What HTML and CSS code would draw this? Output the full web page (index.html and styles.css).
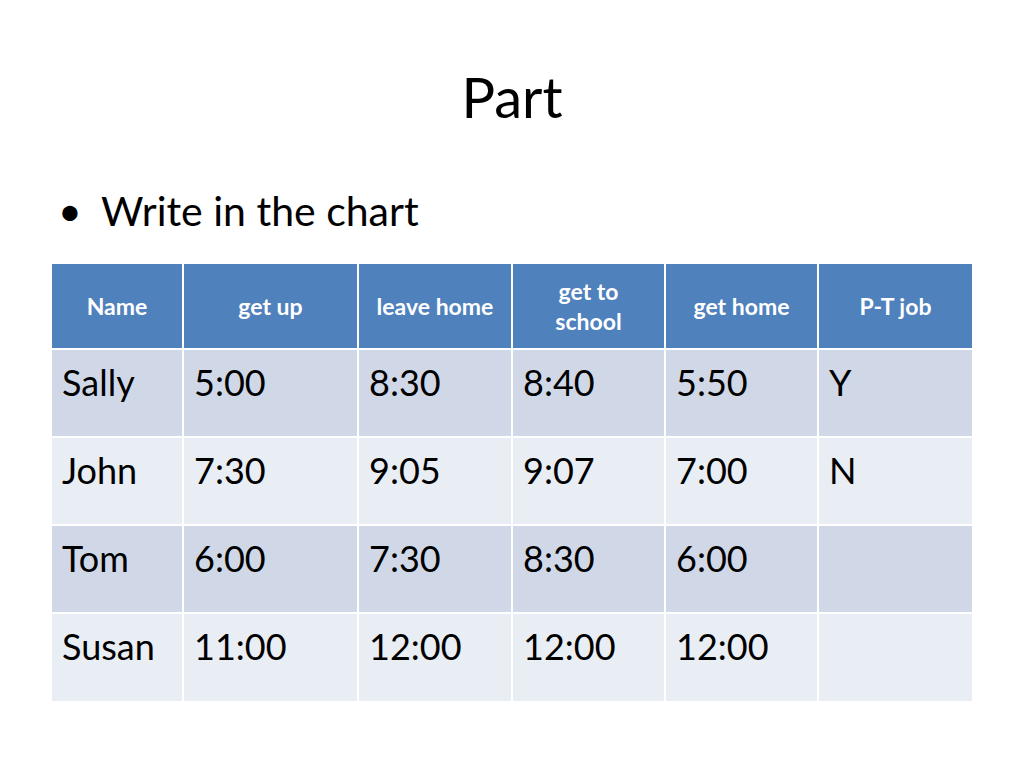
FILE: index.html
```html
<!DOCTYPE html>
<html>
<head>
<meta charset="utf-8">
<link rel="stylesheet" href="styles.css">
</head>
<body>
<div class="slide">
  <h1 class="title">Part</h1>
  <ul class="bullets">
    <li>Write in the chart</li>
  </ul>
  <table class="chart">
    <colgroup>
      <col class="c1"><col class="c2"><col class="c3"><col class="c4"><col class="c5"><col class="c6">
    </colgroup>
    <thead>
      <tr>
        <th>Name</th><th>get up</th><th>leave home</th><th>get to<br>school</th><th>get home</th><th>P-T job</th>
      </tr>
    </thead>
    <tbody>
      <tr class="odd"><td>Sally</td><td>5:00</td><td>8:30</td><td>8:40</td><td>5:50</td><td>Y</td></tr>
      <tr class="even"><td>John</td><td>7:30</td><td>9:05</td><td>9:07</td><td>7:00</td><td>N</td></tr>
      <tr class="odd"><td>Tom</td><td>6:00</td><td>7:30</td><td>8:30</td><td>6:00</td><td></td></tr>
      <tr class="even"><td>Susan</td><td>11:00</td><td>12:00</td><td>12:00</td><td>12:00</td><td></td></tr>
    </tbody>
  </table>
</div>
</body>
</html>
```
FILE: styles.css
```css
html, body {
  margin: 0;
  padding: 0;
  background: #ffffff;
}
.slide {
  width: 1024px;
  height: 768px;
  font-family: "Lato", "Open Sans", sans-serif;
  color: #000;
  padding-top: 62px;
  box-sizing: border-box;
}
.title {
  margin: 0;
  font-weight: normal;
  font-size: 56px;
  line-height: 70px;
  text-align: center;
}
.bullets {
  list-style: none;
  margin: 51px 0 0 0;
  padding: 0 0 0 58px;
}
.bullets li {
  font-size: 41px;
  line-height: 56px;
  display: flex;
  align-items: baseline;
}
.bullets li::before {
  content: "•";
  width: 43px;
  flex: none;
}
.chart {
  margin: 25px 0 0 52px;
  border-collapse: collapse;
  table-layout: fixed;
  width: 920px;
}
.c1 { width: 131px; }
.c2 { width: 175px; }
.c3 { width: 154px; }
.c4 { width: 153px; }
.c5 { width: 153px; }
.c6 { width: 154px; }
.chart th, .chart td {
  border: 2px solid #ffffff;
}
.chart tr:first-child th { border-top: none; }
.chart tr:last-child td { border-bottom: none; }
.chart th:first-child, .chart td:first-child { border-left: none; }
.chart th:last-child, .chart td:last-child { border-right: none; }
.chart th {
  background: #4f81bd;
  color: #ffffff;
  font-weight: bold;
  font-size: 23px;
  line-height: 30px;
  height: 84px;
  padding: 0 4px;
  text-align: center;
  vertical-align: middle;
}
.chart td {
  font-size: 36px;
  line-height: 48px;
  height: 88px;
  padding: 8px 10px 0 10px;
  box-sizing: border-box;
  vertical-align: top;
  text-align: left;
}
.chart tr.odd td { background: #d0d8e8; }
.chart tr.even td { background: #e9edf4; }
```
